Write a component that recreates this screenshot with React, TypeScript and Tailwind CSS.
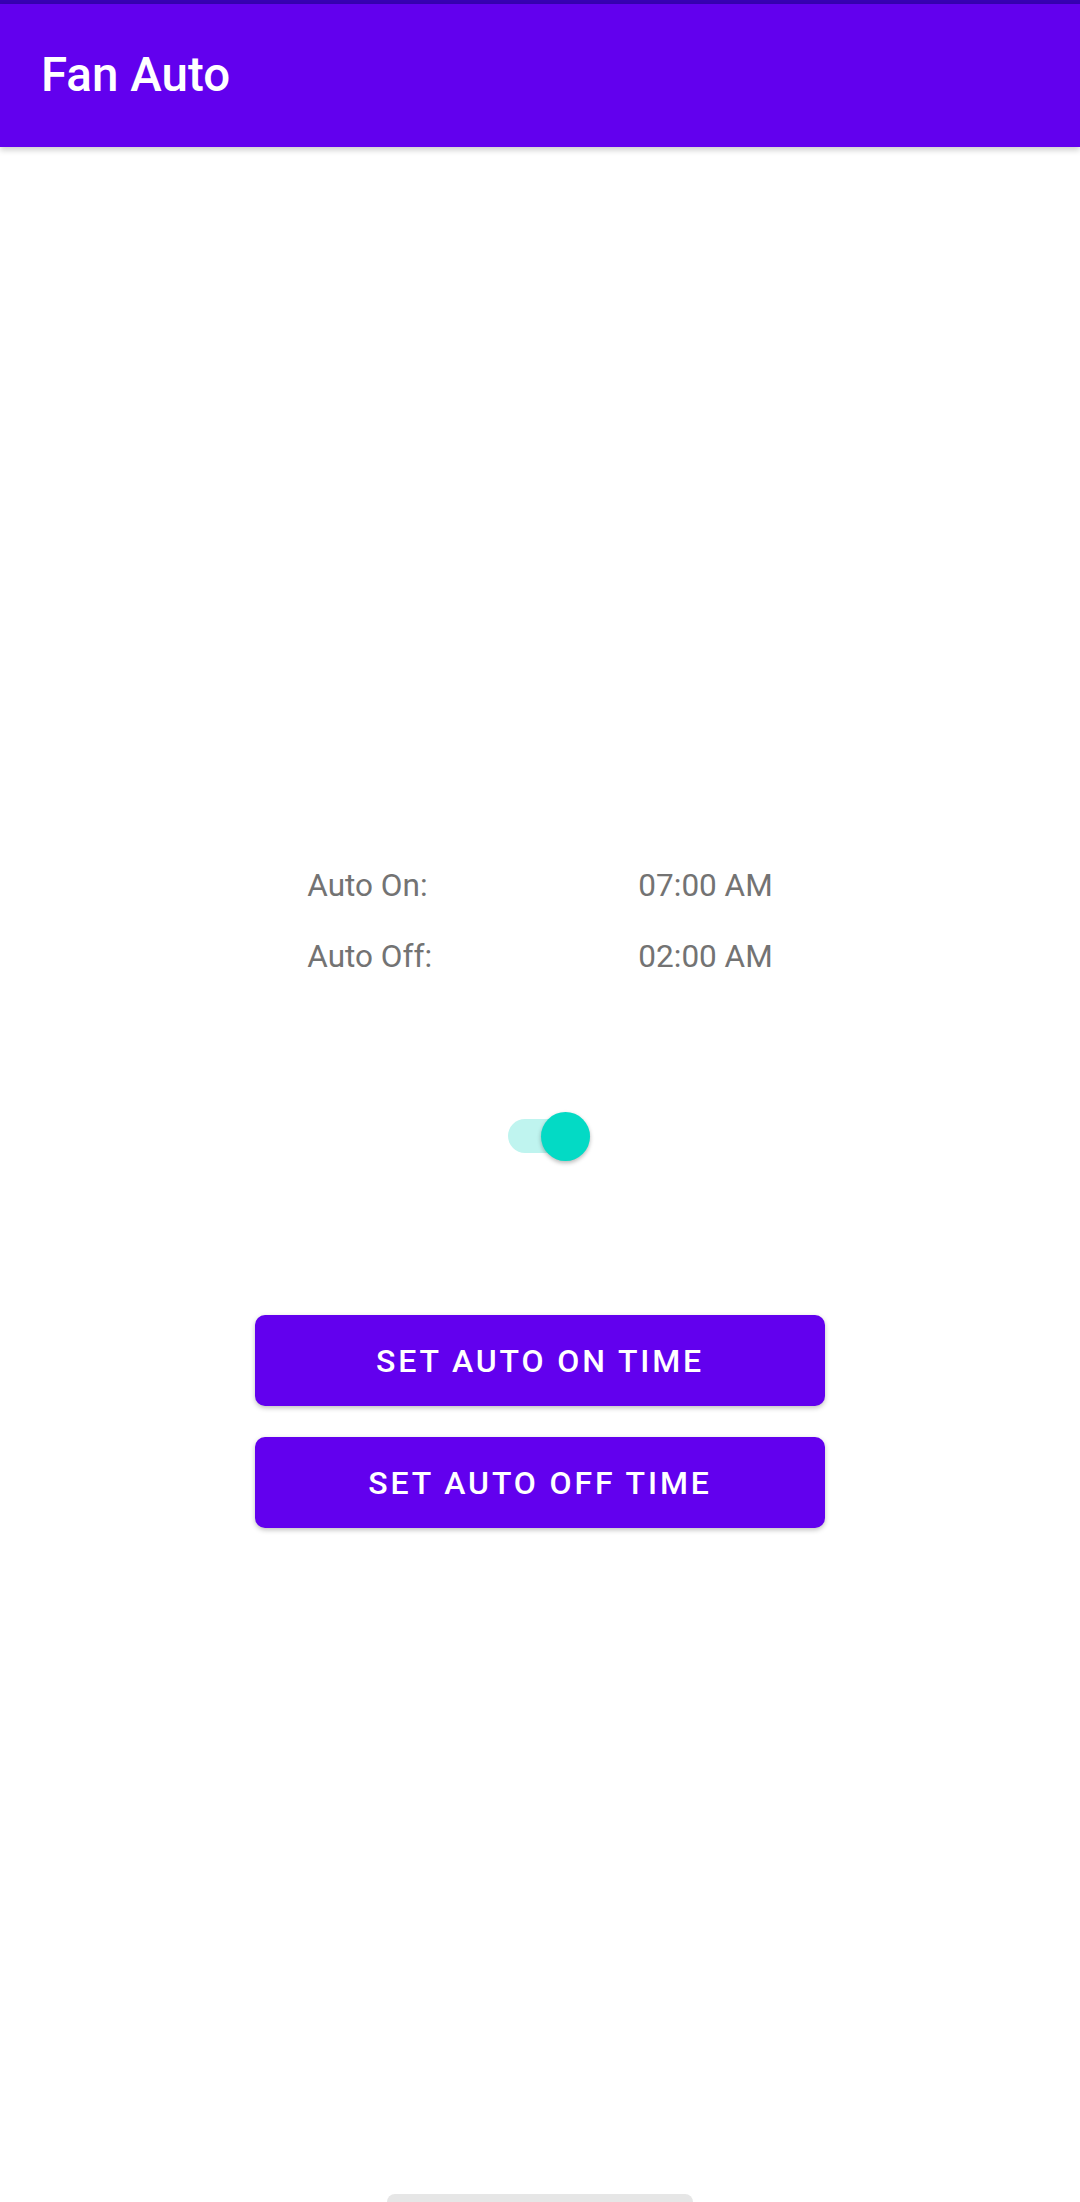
import React, { useState } from 'react';

const times = [
  { label: 'Auto On:', value: '07:00 AM' },
  { label: 'Auto Off:', value: '02:00 AM' },
];

const Switch: React.FC<{ on: boolean; onToggle: () => void }> = ({ on, onToggle }) => (
  <button
    onClick={onToggle}
    aria-label="Toggle auto mode"
    className="relative w-[84px] h-[50px] outline-none"
  >
    <span
      className={`absolute left-0 top-[8px] w-[82px] h-[34px] rounded-full ${on ? 'bg-[#bff4ef]' : 'bg-[#bdbdbd]'}`}
    />
    <span
      className={`absolute top-[1px] w-[49px] h-[49px] rounded-full shadow-[0_2px_4px_rgba(0,0,0,0.28)] ${on ? 'left-[33px] bg-[#03dac5]' : 'left-[-8px] bg-[#f1f1f1]'}`}
    />
  </button>
);

const App: React.FC = () => {
  const [autoEnabled, setAutoEnabled] = useState(true);

  return (
    <div className="h-[2202px] flex flex-col bg-white font-['Roboto',sans-serif] overflow-hidden">
      {/* Status bar stripe + toolbar */}
      <div className="h-[4px] bg-[#3700b3]" />
      <header className="h-[143px] bg-[#6200ee] flex items-center pl-[41px] shadow-[0_3px_6px_rgba(0,0,0,0.2)] relative z-10">
        <h1 className="text-white text-[47.5px] font-medium leading-none">Fan Auto</h1>
      </header>

      {/* Schedule */}
      <div className="mt-[720px] flex justify-center">
        <div className="grid grid-cols-[331px_auto] gap-y-[34px] text-[31.5px] leading-[37px] text-[#737373] whitespace-nowrap">
          {times.map((t) => (
            <React.Fragment key={t.label}>
              <span>{t.label}</span>
              <span>{t.value}</span>
            </React.Fragment>
          ))}
        </div>
      </div>

      <div className="mt-[136px] pl-[508px] flex">
        <Switch on={autoEnabled} onToggle={() => setAutoEnabled(!autoEnabled)} />
      </div>

      <div className="mt-[154px] flex flex-col items-center gap-[31px]">
        {['SET AUTO ON TIME', 'SET AUTO OFF TIME'].map((label) => (
          <button
            key={label}
            className="w-[570px] h-[91px] rounded-[10px] bg-[#6200ee] text-white text-[32px] font-medium tracking-[0.09em] shadow-[0_2px_5px_rgba(0,0,0,0.25)]"
          >
            {label}
          </button>
        ))}
      </div>

      <div className="mt-auto flex justify-center">
        <div className="w-[306px] h-[16px] translate-y-[8px] rounded-full bg-[#e6e6e6]" />
      </div>
    </div>
  );
};

export default App;
